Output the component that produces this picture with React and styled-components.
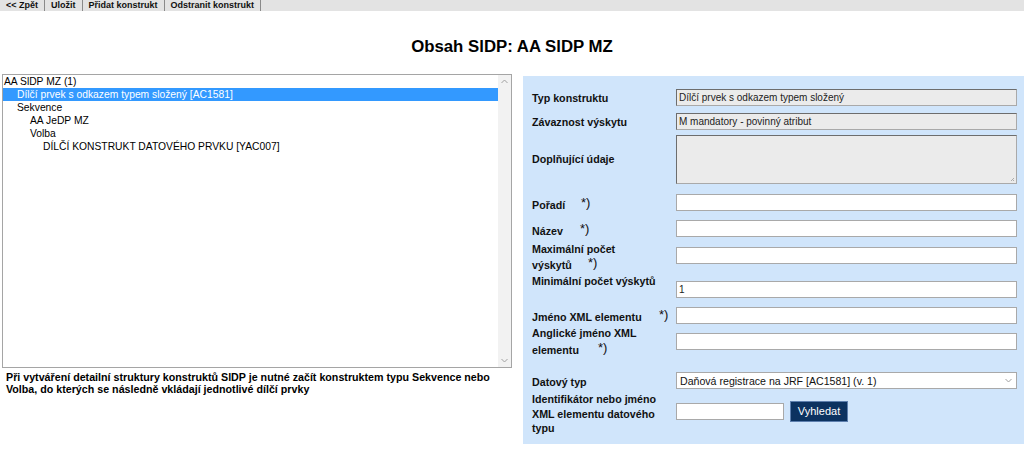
import React from "react";
import styled, { createGlobalStyle } from "styled-components";

const GlobalStyle = createGlobalStyle`
  html, body { margin: 0; padding: 0; background: #ffffff; }
  body { font-family: "Liberation Sans", Arial, sans-serif; color: #000; }
  * { box-sizing: border-box; }
`;

const Page = styled.div`
  width: 1024px;
  height: 449px;
  overflow: hidden;
`;

const Toolbar = styled.div`
  display: flex;
  height: 11px;
  background: #e3e3e3;
  font-size: 9px;
  font-weight: bold;
  line-height: 11px;
`;

const ToolButton = styled.span`
  padding: 0 6px 0 6px;
  border-right: 1px solid #8a8a8a;
  white-space: nowrap;
  color: #111;
`;

const Title = styled.h1`
  margin: 0;
  padding-top: 26px;
  height: 63px;
  text-align: center;
  font-size: 16.8px;
  line-height: 20px;
  font-weight: bold;
`;

const Main = styled.div`
  display: flex;
  align-items: flex-start;
`;

const LeftColumn = styled.div`
  width: 512px;
  padding-left: 2px;
  flex: none;
`;

const ListBox = styled.div`
  height: 294px;
  border: 1px solid #a5a5a5;
  display: flex;
  background: #fff;
`;

const ListItems = styled.div`
  flex: 1;
  font-size: 10.3px;
  line-height: 13px;
`;

const ListItem = styled.div`
  padding-left: ${(p) => 1 + p.$level * 13}px;
  height: 13px;
  white-space: nowrap;
  background: ${(p) => (p.$selected ? "#3399ff" : "transparent")};
  color: ${(p) => (p.$selected ? "#ffffff" : "#000")};
`;

const Scrollbar = styled.div`
  width: 13px;
  background: #f2f2f2;
  display: flex;
  flex-direction: column;
  justify-content: space-between;
  align-items: center;
  padding: 4px 0;
`;

const Note = styled.div`
  padding: 3px 0 0 4px;
  font-size: 10.7px;
  line-height: 12px;
  font-weight: bold;
`;

const Panel = styled.div`
  flex: 1;
  margin: 2px 0 0 11px;
  background: #d0e5fb;
  padding: 11px 7px 10px 9px;
  height: 368px;
`;

const Row = styled.div`
  display: grid;
  grid-template-columns: 144px 1fr;
  height: ${(p) => p.$h}px;
  align-items: start;
`;

const Label = styled.div`
  padding-top: ${(p) => p.$lp}px;
  font-size: 10.7px;
  font-weight: bold;
  line-height: ${(p) => p.$lh || 14}px;
  color: #111;
  white-space: nowrap;
  position: relative;
  z-index: 2;
`;

const LabelText = styled.span`
  display: inline-block;
  width: ${(p) => p.$w}px;
`;

const Star = styled.span`
  display: inline-block;
  font-size: 13px;
  font-weight: normal;
  line-height: 10px;
  white-space: nowrap;
  vertical-align: 2px;
`;

const FieldCell = styled.div`
  padding-top: ${(p) => p.$fp}px;
  display: flex;
  gap: 6px;
  align-items: center;
`;

const TextInput = styled.div`
  width: ${(p) => p.$w || "100%"};
  height: ${(p) => p.$hgt || 17}px;
  border: 1px solid #a9a9a9;
  border-top-color: ${(p) => (p.$ro ? "#6d6d6d" : "#a9a9a9")};
  border-left-color: ${(p) => (p.$ro ? "#6d6d6d" : "#a9a9a9")};
  background: ${(p) => (p.$ro ? "#ebebeb" : "#ffffff")};
  font-size: 10px;
  line-height: 15px;
  padding-left: 2px;
  color: #222;
  position: relative;
  white-space: nowrap;
  overflow: hidden;
`;

const Grip = styled.svg`
  position: absolute;
  right: 1px;
  bottom: 1px;
`;

const SelectBox = styled.div`
  width: 100%;
  height: 17px;
  border: 1px solid #a9a9a9;
  background: #fff;
  display: flex;
  align-items: center;
  justify-content: space-between;
  padding: 0 4px 0 3px;
  font-size: 10.6px;
  color: #111;
`;

const SearchButton = styled.div`
  width: 58px;
  height: 21px;
  background: #0c3260;
  border: 1px solid #5d7fae;
  color: #fff;
  font-size: 11px;
  line-height: 19px;
  text-align: center;
`;

const Chevron = ({ up }) => (
  <svg width="7" height="5" viewBox="0 0 7 5">
    <path
      d={up ? "M0.5 4 L3.5 1 L6.5 4" : "M0.5 1 L3.5 4 L6.5 1"}
      fill="none"
      stroke="#a0a0a0"
      strokeWidth="1"
    />
  </svg>
);

const treeItems = [
  { level: 0, text: "AA SlDP MZ (1)" },
  { level: 1, text: "Dílčí prvek s odkazem typem složený [AC1581]", selected: true },
  { level: 1, text: "Sekvence" },
  { level: 2, text: "AA JeDP MZ" },
  { level: 2, text: "Volba" },
  { level: 3, text: "DÍLČÍ KONSTRUKT DATOVÉHO PRVKU [YAC007]" },
];

export default function App() {
  return (
    <Page>
      <GlobalStyle />
      <Toolbar>
        <ToolButton>&lt;&lt; Zpět</ToolButton>
        <ToolButton>Uložit</ToolButton>
        <ToolButton>Přidat konstrukt</ToolButton>
        <ToolButton>Odstranit konstrukt</ToolButton>
      </Toolbar>
      <Title>Obsah SlDP: AA SlDP MZ</Title>
      <Main>
        <LeftColumn>
          <ListBox>
            <ListItems>
              {treeItems.map((it, i) => (
                <ListItem key={i} $level={it.level} $selected={it.selected}>
                  {it.text}
                </ListItem>
              ))}
            </ListItems>
            <Scrollbar>
              <Chevron up />
              <Chevron />
            </Scrollbar>
          </ListBox>
          <Note>
            Při vytváření detailní struktury konstruktů SlDP je nutné začít konstruktem typu Sekvence nebo
            <br />
            Volba, do kterých se následně vkládají jednotlivé dílčí prvky
          </Note>
        </LeftColumn>
        <Panel>
          <Row $h={23}>
            <Label $lp={4}>Typ konstruktu</Label>
            <FieldCell $fp={2}>
              <TextInput $ro>Dílčí prvek s odkazem typem složený</TextInput>
            </FieldCell>
          </Row>
          <Row $h={23}>
            <Label $lp={5}>Závaznost výskytu</Label>
            <FieldCell $fp={3}>
              <TextInput $ro>M mandatory - povinný atribut</TextInput>
            </FieldCell>
          </Row>
          <Row $h={55}>
            <Label $lp={19}>Doplňující údaje</Label>
            <FieldCell $fp={2}>
              <TextInput $ro $hgt={49}>
                <Grip width="5" height="5" viewBox="0 0 5 5">
                  <path d="M4 1 L1 4 M4 3 L3 4" stroke="#9a9a9a" strokeWidth="0.8" />
                </Grip>
              </TextInput>
            </FieldCell>
          </Row>
          <Row $h={28}>
            <Label $lp={10}>
              <LabelText $w={49}>Pořadí</LabelText>
              <Star>*)</Star>
            </Label>
            <FieldCell $fp={6}>
              <TextInput />
            </FieldCell>
          </Row>
          <Row $h={25}>
            <Label $lp={8}>
              <LabelText $w={48}>Název</LabelText>
              <Star>*)</Star>
            </Label>
            <FieldCell $fp={4}>
              <TextInput />
            </FieldCell>
          </Row>
          <Row $h={31}>
            <Label $lp={0} $lh={16}>
              Maximální počet
              <br />
              <LabelText $w={56}>výskytů</LabelText>
              <Star>*)</Star>
            </Label>
            <FieldCell $fp={6}>
              <TextInput />
            </FieldCell>
          </Row>
          <Row $h={30}>
            <Label $lp={2}>Minimální počet výskytů</Label>
            <FieldCell $fp={9}>
              <TextInput>1</TextInput>
            </FieldCell>
          </Row>
          <Row $h={23}>
            <Label $lp={8}>
              <LabelText $w={127}>Jméno XML elementu</LabelText>
              <Star>*)</Star>
            </Label>
            <FieldCell $fp={5}>
              <TextInput />
            </FieldCell>
          </Row>
          <Row $h={35}>
            <Label $lp={0} $lh={17}>
              Anglické jméno XML
              <br />
              <LabelText $w={66}>elementu</LabelText>
              <Star>*)</Star>
            </Label>
            <FieldCell $fp={8}>
              <TextInput />
            </FieldCell>
          </Row>
          <Row $h={32}>
            <Label $lp={15}>Datový typ</Label>
            <FieldCell $fp={12}>
              <SelectBox>
                <span>Daňová registrace na JRF [AC1581] (v. 1)</span>
                <Chevron />
              </SelectBox>
            </FieldCell>
          </Row>
          <Row $h={42}>
            <Label $lp={0} $lh={14.5}>
              Identifikátor nebo jméno
              <br />
              XML elementu datového
              <br />
              typu
            </Label>
            <FieldCell $fp={9}>
              <TextInput $w="108px" />
              <SearchButton>Vyhledat</SearchButton>
            </FieldCell>
          </Row>
        </Panel>
      </Main>
    </Page>
  );
}
